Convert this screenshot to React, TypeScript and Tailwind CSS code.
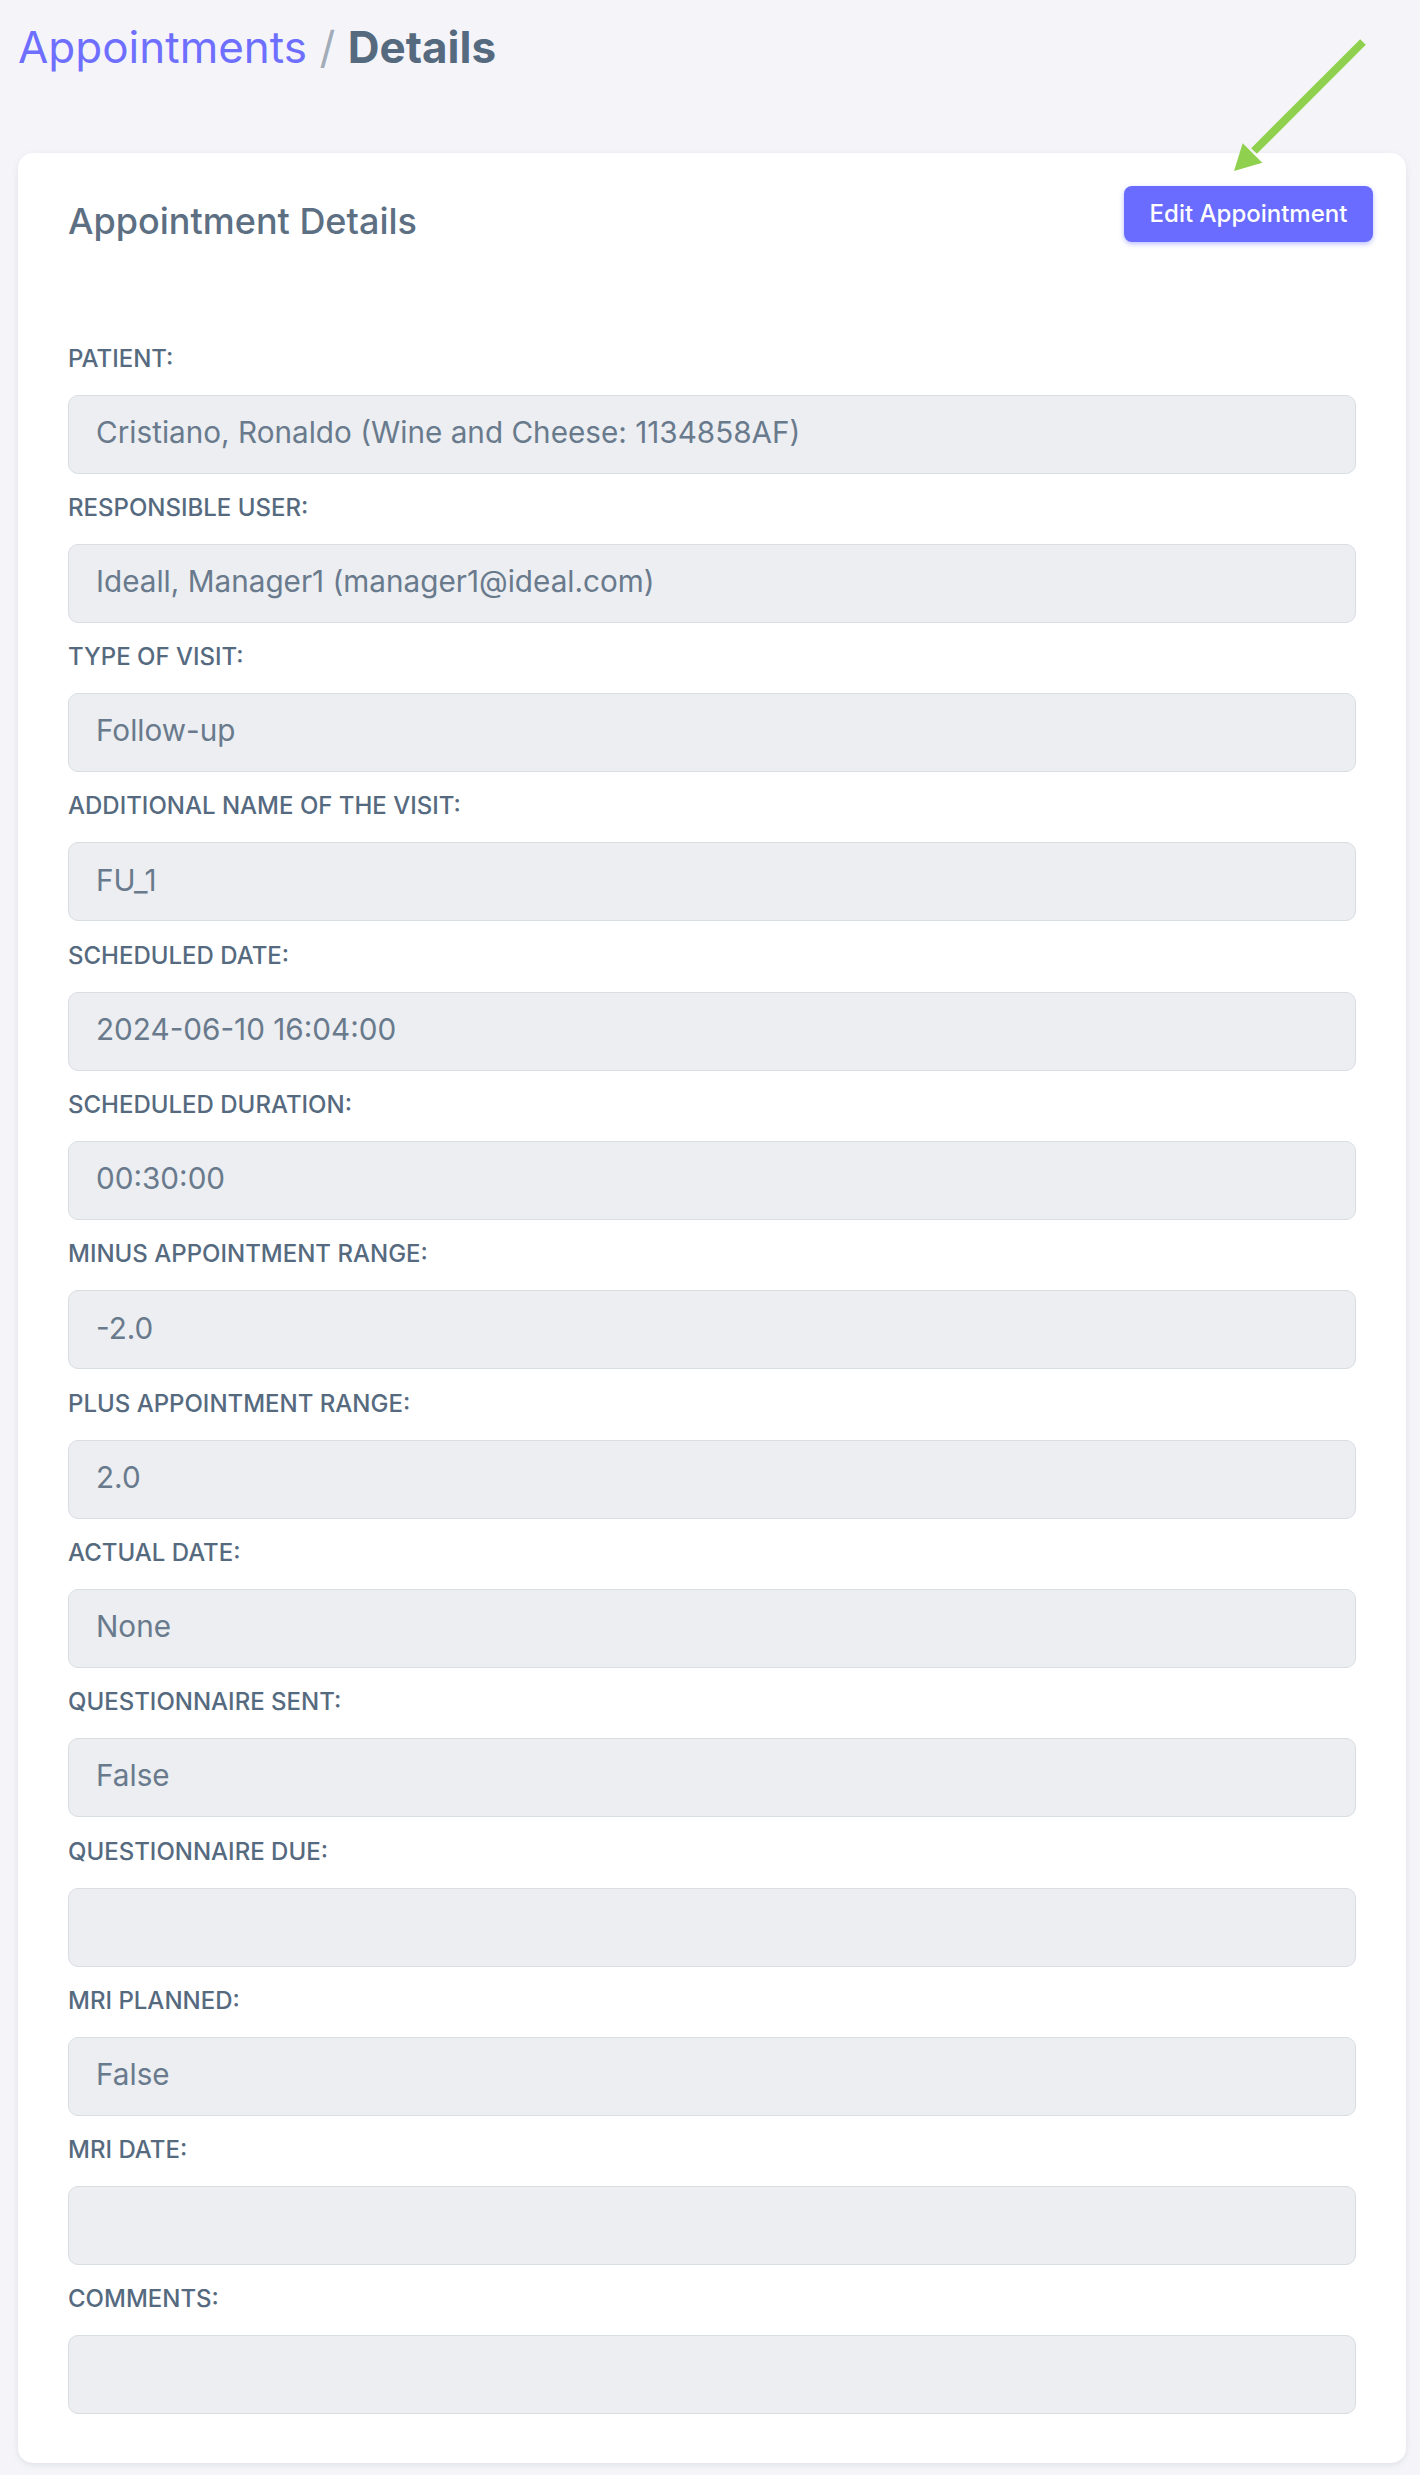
import React from "react";

interface Field {
  label: string;
  value: string;
}

const fields: Field[] = [
  { label: "Patient:", value: "Cristiano, Ronaldo (Wine and Cheese: 1134858AF)" },
  { label: "Responsible user:", value: "Ideall, Manager1 (manager1@ideal.com)" },
  { label: "Type of visit:", value: "Follow-up" },
  { label: "Additional name of the visit:", value: "FU_1" },
  { label: "Scheduled date:", value: "2024-06-10 16:04:00" },
  { label: "Scheduled duration:", value: "00:30:00" },
  { label: "Minus appointment range:", value: "-2.0" },
  { label: "Plus appointment range:", value: "2.0" },
  { label: "Actual date:", value: "None" },
  { label: "Questionnaire sent:", value: "False" },
  { label: "Questionnaire due:", value: "" },
  { label: "MRI planned:", value: "False" },
  { label: "MRI date:", value: "" },
  { label: "Comments:", value: "" },
];

function GreenArrow() {
  // annotation arrow pointing at the edit button
  return (
    <svg
      className="absolute left-[1220px] top-[30px]"
      width="155"
      height="150"
      viewBox="0 0 155 150"
    >
      <line x1="143" y1="12" x2="34" y2="121" stroke="#8fd14f" strokeWidth="8" />
      <polygon points="14,141 22.7,113.2 42.3,132.8" fill="#8fd14f" />
    </svg>
  );
}

export default function App() {
  return (
    <div className="relative min-h-[2475px] bg-[#f5f5f9] pl-[18px] pr-[14px] pt-[21px] font-[Inter,'Noto_Sans',sans-serif]">
      <h1 className="text-[44px] leading-[52px] mb-[80px]">
        <span className="text-[#6f6fff]">Appointments</span>
        <span className="text-[#a1acb8]"> / </span>
        <span className="font-bold text-[#566a7f]">Details</span>
      </h1>

      <div className="rounded-[15px] bg-white shadow-[0_2px_6px_0_rgba(67,89,113,0.12)] pb-[49px]">
        <div className="flex justify-between items-start pt-[33px] pl-[50px] pr-[33px]">
          <h2 className="mt-[14px] text-[36px] leading-[43px] font-medium text-[#5d6f82]">
            Appointment Details
          </h2>
          <button className="h-[56px] w-[249px] rounded-[8px] bg-[#696cff] text-white text-[24px] font-medium flex items-center justify-center shadow-[0_2px_5px_0_rgba(105,108,255,0.45)]">
            Edit Appointment
          </button>
        </div>

        <div className="flex flex-col gap-[20.3px] mt-[101.6px] px-[50px]">
          {fields.map((field, index) => (
            <div key={index}>
              <div className="uppercase text-[24px] leading-[28px] font-medium text-[#566a7f] mb-[22px]">
                {field.label}
              </div>
              <div className="h-[79px] rounded-[10px] border border-[#d9dee3] bg-[#eceef1] flex items-center pl-[27px] pb-[4px] text-[29.7px] text-[#697a8d]">
                {field.value}
              </div>
            </div>
          ))}
        </div>
      </div>

      <GreenArrow />
    </div>
  );
}
